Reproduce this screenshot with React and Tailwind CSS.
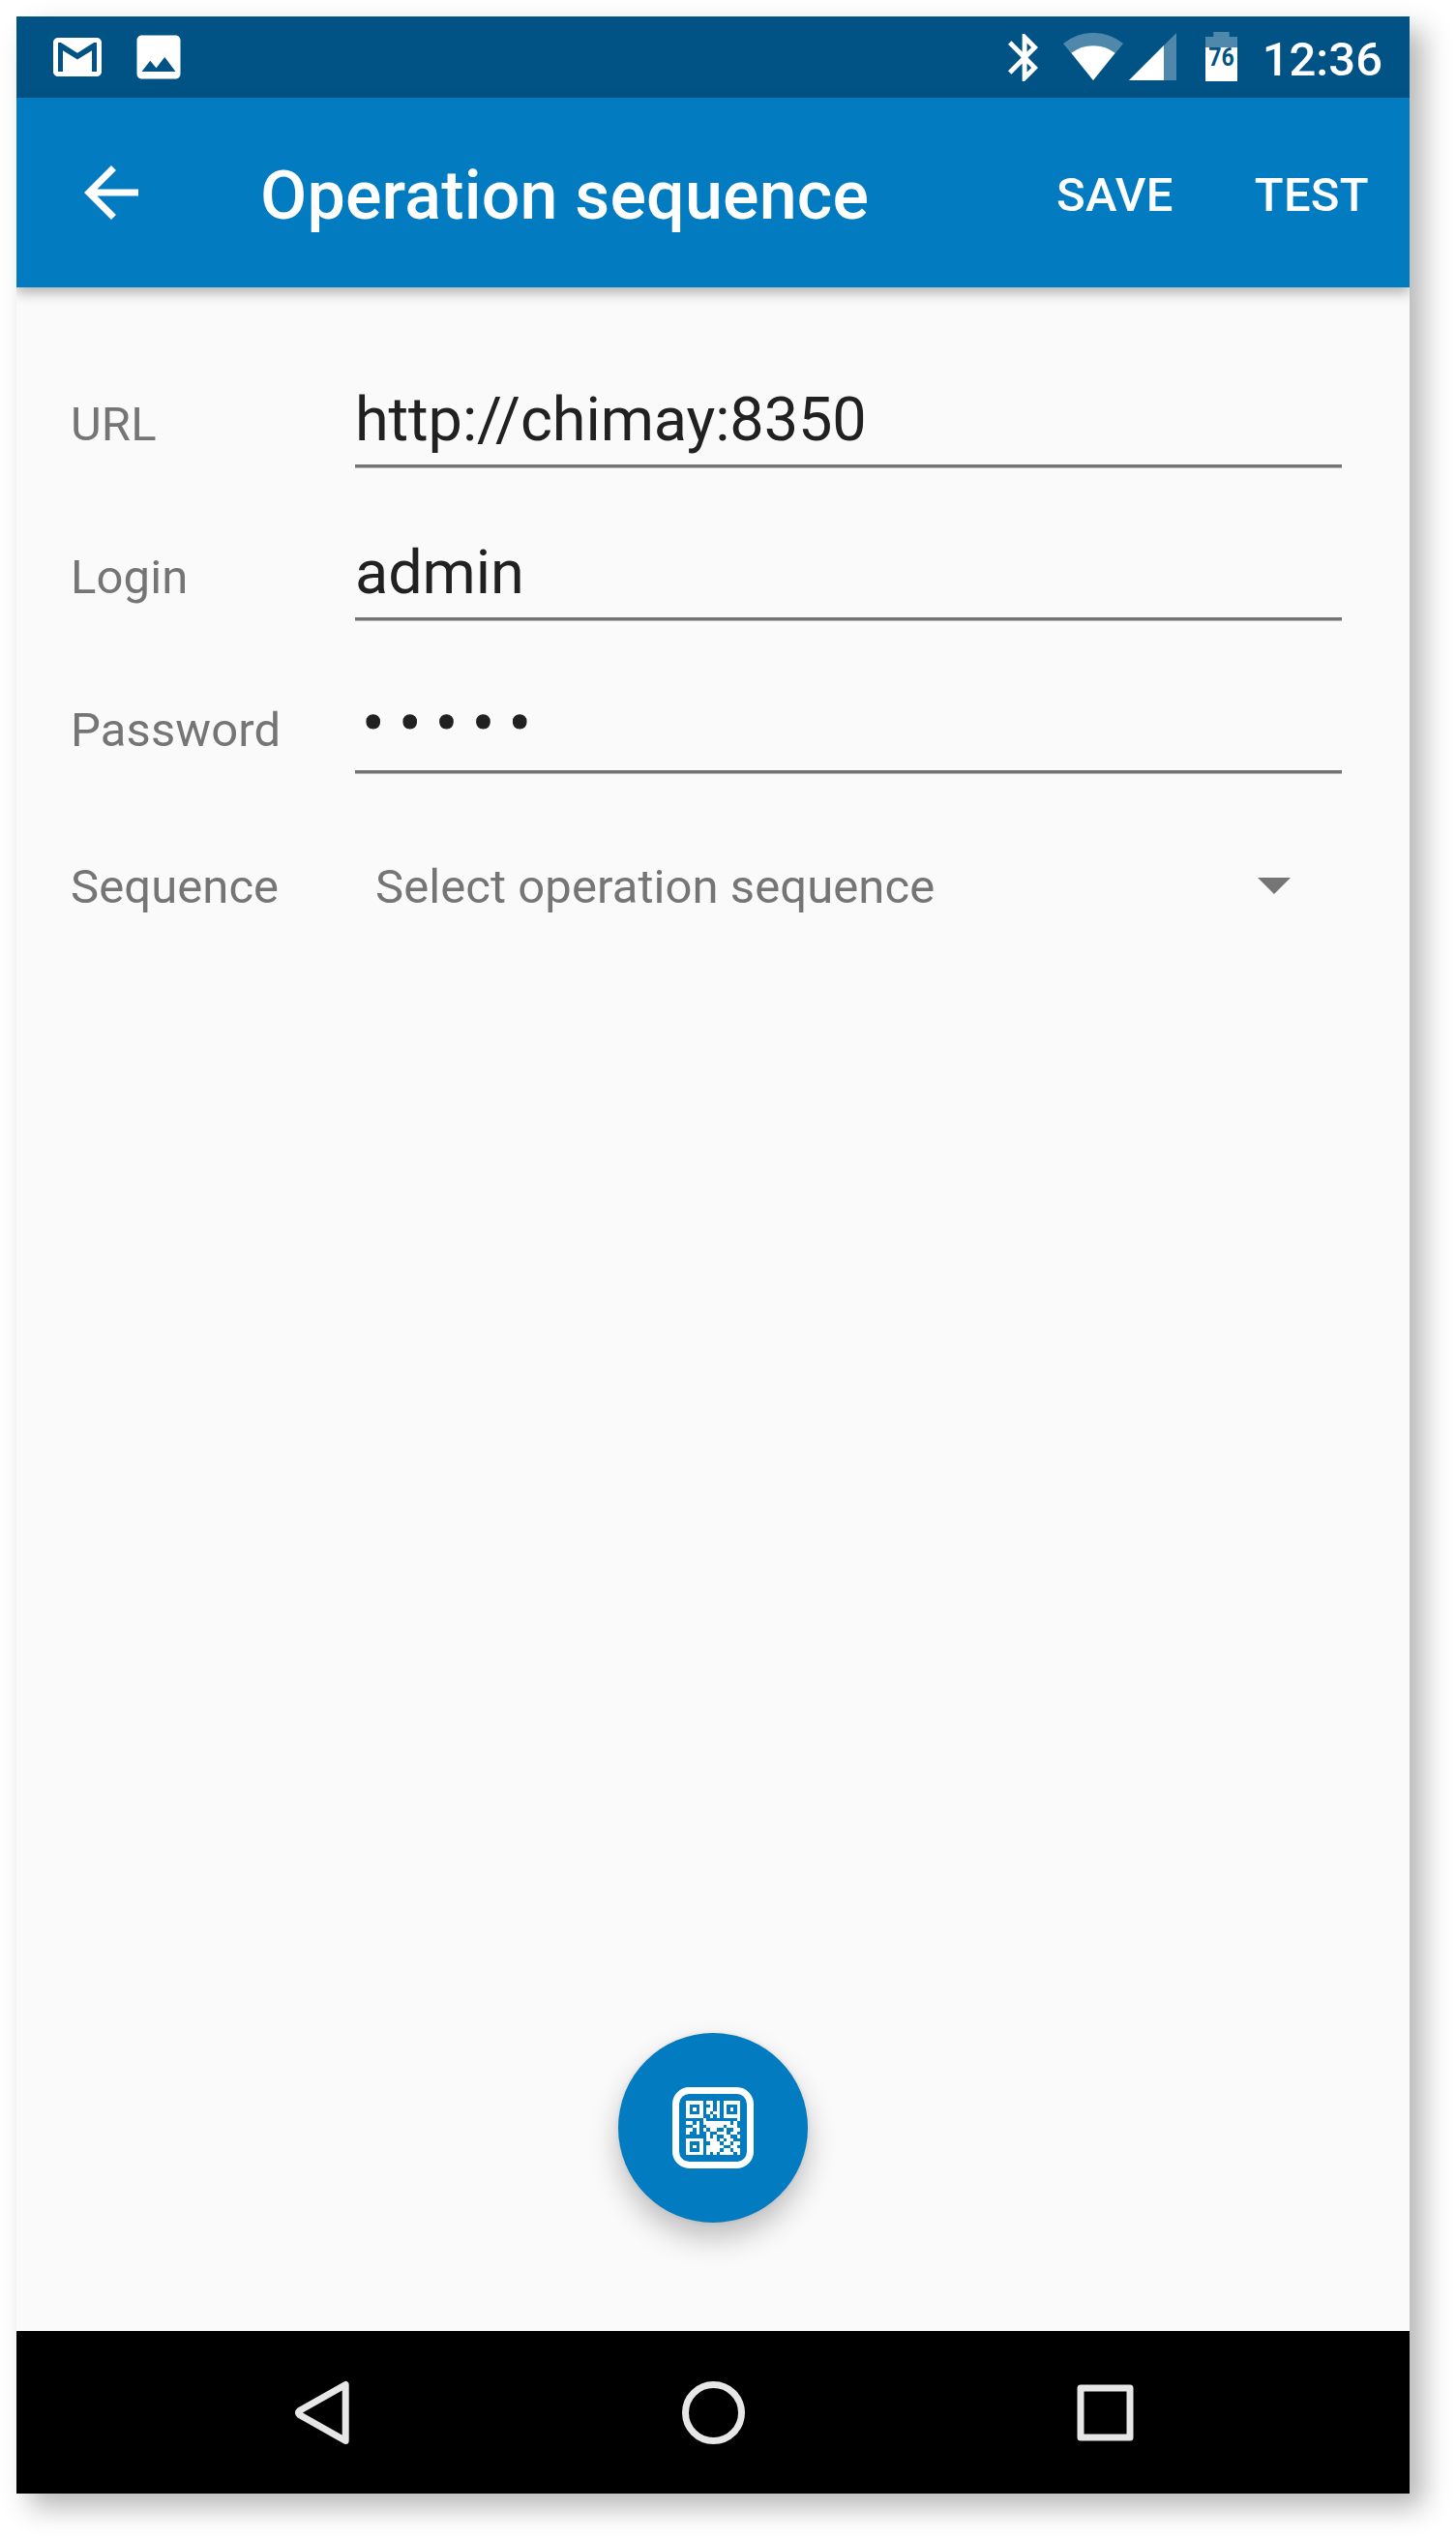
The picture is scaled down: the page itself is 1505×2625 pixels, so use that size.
const QR_ROWS = [
  '#####.##.#.#####',
  '#...#..#.#.#...#',
  '#.#.#.##.#.#.#.#',
  '#...#.#.##.#...#',
  '#####..#.#.#####',
  '.....#.........#',
  '##.#.########.#.',
  '..##..#####.###.',
  '##.#.#.##..#..##',
  '#..#..#..###.##.',
  '......#.#..##..#',
  '#####.###.#.##..',
  '#...#..###.##.##',
  '#.#.#.#####..##.',
  '#...#.####.##.##',
  '#####.#.#.####.#',
];

function GmailIcon() {
  return (
    <svg className="size-[60px]" viewBox="0 0 24 24" fill="#fff">
      <path d="M20 18h-2V9.25L12 13 6 9.25V18H4V6h1.2l6.8 4.25L18.8 6H20v12zm0-14H4c-1.1 0-2 .9-2 2v12c0 1.1.9 2 2 2h16c1.1 0 2-.9 2-2V6c0-1.1-.9-2-2-2z" />
    </svg>
  );
}

function PhotoIcon() {
  return (
    <svg className="size-[60px]" viewBox="0 0 24 24" fill="#fff">
      <path d="M21 19V5c0-1.1-.9-2-2-2H5c-1.1 0-2 .9-2 2v14c0 1.1.9 2 2 2h14c1.1 0 2-.9 2-2zM8.5 13.5l2.5 3.01L14.5 12l4.5 6H5l3.5-4.5z" />
    </svg>
  );
}

function BluetoothIcon() {
  return (
    <svg className="h-[49px] w-[31px]" viewBox="5 2 12.71 20" preserveAspectRatio="none" fill="#fff">
      <path d="M17.71 7.71L12 2h-1v7.59L6.41 5 5 6.41 10.59 12 5 17.59 6.41 19 11 14.41V22h1l5.71-5.71-4.3-4.29 4.3-4.29zM13 5.83l1.88 1.88L13 9.59V5.83zm1.88 10.46L13 18.17v-3.76l1.88 1.88z" />
    </svg>
  );
}

function WifiIcon() {
  return (
    <svg className="h-[49px] w-[62px]" viewBox="0 0 62 49" fill="#fff">
      <path d="M31 49L0 11A49 49 0 0 1 62 11Z" opacity=".31" />
      <path d="M31 49L8.4 20.8A38 38 0 0 1 53.6 20.8Z" />
    </svg>
  );
}

function SignalIcon() {
  return (
    <svg className="h-[49px] w-[49px]" viewBox="0 0 49 49" fill="#fff">
      <path d="M49 0V49H0Z" opacity=".31" />
      <path d="M36 13V49H0Z" />
    </svg>
  );
}

function BatteryIcon() {
  return (
    <svg className="h-[51px] w-[33px]" viewBox="0 0 33 51">
      <path d="M8.3 0H24.7V5H33V16H0V5H8.3Z" fill="#fff" opacity=".31" />
      <rect y="16" width="33" height="35" fill="#fff" />
      <text
        x="3.3"
        y="35"
        textLength="26.5"
        lengthAdjust="spacingAndGlyphs"
        fontFamily="Roboto, sans-serif"
        fontWeight="700"
        fontSize="25.5"
        fill="#005384"
      >
        76
      </text>
    </svg>
  );
}

function StatusBar() {
  return (
    <div className="flex h-[84px] items-start bg-[#005384] pr-[28px] pl-[33px]">
      <div className="mt-3 flex gap-6">
        <GmailIcon />
        <PhotoIcon />
      </div>
      <div className="ml-auto flex items-start">
        <div className="mt-[18px] mr-[26px]"><BluetoothIcon /></div>
        <div className="mt-[17px] mr-[6px]"><WifiIcon /></div>
        <div className="mt-[17px] mr-[30px]"><SignalIcon /></div>
        <div className="mt-[16px]"><BatteryIcon /></div>
        <span className="mt-[16px] w-[150px] text-right text-[49px] leading-[57px] font-medium text-white">12:36</span>
      </div>
    </div>
  );
}

function AppBar() {
  return (
    <header className="relative flex h-[196px] items-center bg-[#027bc1] pr-[42px] pl-14 text-white shadow-[0_6px_12px_rgba(0,0,0,0.28)]">
      <svg className="size-[84px]" viewBox="0 0 24 24" fill="#fff">
        <path d="M20 11H7.83l5.59-5.59L12 4l-8 8 8 8 1.41-1.41L7.83 13H20v-2z" />
      </svg>
      <h1 className="ml-28 pt-[6px] text-[70px] leading-[82px] font-medium tracking-[0.17px] whitespace-nowrap">Operation sequence</h1>
      <nav className="ml-auto flex gap-[84px] pt-[4px] text-[49px] leading-[57px] font-medium tracking-[0.3px]">
        <button>SAVE</button>
        <button>TEST</button>
      </nav>
    </header>
  );
}

function Field({ label, children }) {
  return (
    <div className="flex h-[158px] items-baseline">
      <label className="w-[294px] text-[49px] leading-[57px] tracking-[0.1px] text-[#757575]">{label}</label>
      <div className="h-[86px] w-[1020px] border-b-[3px] border-[#737373] text-[63px] leading-[74px] tracking-[-0.1px] text-[#212121] shadow-[0_1px_0_#b5b5b5]">
        {children}
      </div>
    </div>
  );
}

function QrButton() {
  return (
    <button className="flex size-[196px] items-center justify-center rounded-full bg-[#027bc1] shadow-[0_16px_30px_rgba(0,0,0,0.24),0_0_5px_rgba(0,0,0,0.08)]">
      <svg className="size-[84px]" viewBox="0 0 84 84" fill="#fff">
        <rect x="3.5" y="3.5" width="77" height="77" rx="14" fill="none" stroke="#fff" strokeWidth="7" />
        {QR_ROWS.map((row, y) =>
          [...row].map((cell, x) =>
            cell === '#' ? (
              <rect key={`${x}-${y}`} x={14 + x * 3.5} y={14 + y * 3.5} width="3.5" height="3.5" shapeRendering="crispEdges" />
            ) : null,
          ),
        )}
      </svg>
    </button>
  );
}

function NavBar() {
  return (
    <div className="flex h-[168px] items-center justify-between bg-black px-[273px]">
      <svg className="size-[84px]" viewBox="0 0 84 84" fill="none" stroke="#e6e6e6" strokeWidth="7" strokeLinejoin="round">
        <path d="M67.2 13.5V71.5L19.8 44.8Q17 42.5 19.8 40.2Z" />
      </svg>
      <svg className="size-[84px]" viewBox="0 0 84 84" fill="none" stroke="#e6e6e6" strokeWidth="7">
        <circle cx="42.5" cy="42.5" r="29" />
      </svg>
      <svg className="size-[84px]" viewBox="0 0 84 84" fill="none" stroke="#e6e6e6" strokeWidth="7" strokeLinejoin="round">
        <rect x="17" y="17" width="51" height="51" />
      </svg>
    </div>
  );
}

export default function App() {
  return (
    <div className="h-[2625px] w-[1505px] overflow-hidden bg-white p-[17px] font-['Roboto',sans-serif]">
      <div className="h-[2560px] w-[1440px] shadow-[14px_14px_27px_rgba(0,0,0,0.29)]">
        <div className="flex h-full flex-col overflow-hidden bg-[#fafafa]">
          <StatusBar />
          <AppBar />
          <main className="flex flex-1 flex-col pt-[100px] pl-14">
            <Field label="URL">http://chimay:8350</Field>
            <Field label="Login">admin</Field>
            <Field label="Password">
              <span className="ml-[7.5px] text-[67px] leading-none tracking-[15.3px] [-webkit-text-stroke:1.2px_#212121]">•••••</span>
            </Field>
            <div className="mt-[17px] flex items-center text-[49px] leading-[57px] tracking-[0.07px] text-[#757575]">
              <span className="w-[315px]">Sequence</span>
              <span>Select operation sequence</span>
              <svg className="mr-[123px] mb-0.5 ml-auto h-[17px] w-[34px]" viewBox="0 0 34 17" fill="#757575">
                <path d="M0 0H34L17 17Z" />
              </svg>
            </div>
            <div className="mt-auto mr-14 mb-[112px] flex justify-center">
              <QrButton />
            </div>
          </main>
          <NavBar />
        </div>
      </div>
    </div>
  );
}
